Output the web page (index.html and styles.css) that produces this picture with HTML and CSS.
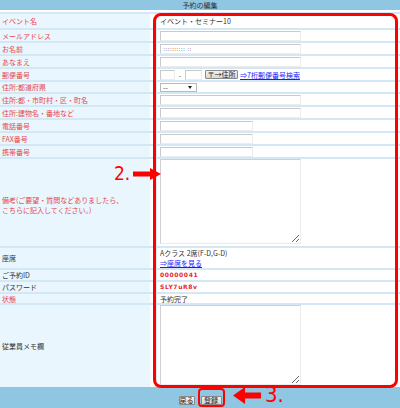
FILE: index.html
```html
<!DOCTYPE html>
<html lang="ja">
<head>
<meta charset="utf-8">
<title>予約の編集</title>
<link rel="stylesheet" href="styles.css">
</head>
<body>
<div class="page">
  <div class="header">予約の編集</div>
  <div class="form">
    <div class="row h16"><div class="label req">イベント名</div><div class="val">イベント・セミナー10</div></div>
    <div class="row h13"><div class="label req">メールアドレス</div><div class="val"><input class="txt" type="text"></div></div>
    <div class="row h13"><div class="label req">お名前</div><div class="val"><div class="txt name"><span class="dots">:::::::::: ::</span></div></div></div>
    <div class="row h13"><div class="label req">あなまえ</div><div class="val"><input class="txt" type="text"></div></div>
    <div class="row h13"><div class="label req">郵便番号</div><div class="val"><input class="txt zip1" type="text"><span class="dash">-</span><input class="txt zip2" type="text"><button class="btn zipbtn" type="button">〒→住所</button><a class="link" href="#">⇒7桁郵便番号検索</a></div></div>
    <div class="row h12"><div class="label req">住所:都道府県</div><div class="val"><div class="sel"><span>--</span><span class="tri"></span></div></div></div>
    <div class="row h13"><div class="label req">住所:都・市町村・区・町名</div><div class="val"><input class="txt" type="text"></div></div>
    <div class="row h13"><div class="label req">住所:建物名・番地など</div><div class="val"><input class="txt" type="text"></div></div>
    <div class="row h13"><div class="label req">電話番号</div><div class="val"><input class="txt short" type="text"></div></div>
    <div class="row h13"><div class="label req">FAX番号</div><div class="val"><input class="txt short" type="text"></div></div>
    <div class="row h13"><div class="label req">携帯番号</div><div class="val"><input class="txt short" type="text"></div></div>
    <div class="row h89"><div class="label req two">備考(ご要望・質問などありましたら、<br>こちらに記入してください。)</div><div class="val top"><textarea class="area a85"></textarea></div></div>
    <div class="row h22"><div class="label">座席</div><div class="val col"><span>Aクラス 2席(F-D,G-D)</span><a class="link" href="#">⇒座席を見る</a></div></div>
    <div class="row h12"><div class="label">ご予約ID</div><div class="val"><span class="redval">00000041</span></div></div>
    <div class="row h12"><div class="label">パスワード</div><div class="val"><span class="redval">SLY7uR8v</span></div></div>
    <div class="row h11"><div class="label req">状態</div><div class="val">予約完了</div></div>
    <div class="row h84"><div class="label">従業員メモ欄</div><div class="val top"><textarea class="area a80"></textarea></div></div>
  </div>
  <div class="footer">
    <button class="btn fbtn back" type="button">戻る</button>
    <button class="btn fbtn save" type="button">登録</button>
  </div>

  <div class="hl-main"></div>
  <div class="hl-btn"></div>
  <span class="step step2">2.</span>
  <svg class="arrow arrow2" width="28" height="16" viewBox="0 0 28 16"><polygon points="0,5.5 17,5.5 17,2 28,8 17,14 17,10.5 0,10.5" fill="#ff0000"/></svg>
  <svg class="arrow arrow3" width="28" height="17" viewBox="0 0 28 17"><polygon points="0,8.5 12,0 12,5.5 28,5.5 28,11.5 12,11.5 12,17" fill="#ff0000"/></svg>
  <span class="step step3">3.</span>
</div>
</body>
</html>
```
FILE: styles.css
```css
* { box-sizing: border-box; margin: 0; padding: 0; }
html, body { width: 400px; height: 408px; overflow: hidden; background: #fff; }
body {
  font-family: "Noto Sans CJK JP", "Noto Sans", sans-serif;
  font-size: 7px;
  color: #333;
}
.page { position: relative; width: 400px; height: 408px; display: flex; flex-direction: column; }

.header {
  height: 10px;
  margin-bottom: 2px;
  background: #8fc6e1;
  text-align: center;
  line-height: 10px;
  color: #333;
}

.form { display: flex; flex-direction: column; }
.row { display: flex; border-top: 2px solid #d3e7f5; background: #fff; }
.h11 { height: 11px; } .h12 { height: 12px; } .h13 { height: 13px; } .h16 { height: 16px; }
.h22 { height: 22px; } .h84 { height: 84px; } .h89 { height: 89px; }

.label {
  width: 150px;
  flex: none;
  background: #e9f6fd;
  display: flex;
  align-items: center;
  padding-left: 2px;
  color: #333;
  white-space: nowrap;
  line-height: 10px;
}
.label.req { color: #e8474b; }
.label.two { padding-top: 4px; }

.val {
  flex: 1;
  margin-left: 5px;
  border-left: 2px solid #d3e7f5;
  padding-left: 3px;
  display: flex;
  align-items: center;
  white-space: nowrap;
  line-height: 10px;
}
.val.top { align-items: flex-start; padding-top: 0; }
.val.col { flex-direction: column; align-items: flex-start; justify-content: center; line-height: 10px; }

.txt {
  width: 141px;
  height: 10px;
  border: 1px solid;
  border-color: #c9c9c9 #ececec #ececec #c9c9c9;
  background: #fff;
  font: inherit;
  outline: none;
}
.txt.short { width: 93px; }
.txt.zip1 { width: 15px; }
.txt.zip2 { width: 17px; }
.name { display: flex; align-items: center; padding-left: 2px; }
.dots { color: #666; font-family: "DejaVu Sans", sans-serif; font-size: 6px; letter-spacing: 0.2px; line-height: 8px; }
.dash { width: 10px; text-align: center; color: #444; }

.btn {
  font: inherit;
  font-size: 7px;
  line-height: 7px;
  color: #222;
  background: linear-gradient(#f2f2f2, #d6d6d6);
  border: 1px solid #8a8a8a;
  border-radius: 1px;
  padding: 0;
}
.zipbtn { width: 33px; height: 9px; margin-left: 3px; }
.link { color: #1b1bff; text-decoration: underline; margin-left: 2px; }
.val.col .link { margin-left: 0; }

.sel {
  width: 37px;
  height: 9px;
  border: 1px solid #b8b8b8;
  background: #fff;
  display: flex;
  align-items: center;
  justify-content: space-between;
  padding: 0 4px 0 2px;
  line-height: 7px;
}
.tri { width: 0; height: 0; border-left: 2.5px solid transparent; border-right: 2.5px solid transparent; border-top: 3px solid #222; }

.area {
  width: 141px;
  border: 1px solid;
  border-color: #d0d0d0 #ececec #ececec #d0d0d0;
  background: #fff;
  font: inherit;
  outline: none;
}
.a85 { height: 85px; }
.a80 { height: 80px; margin-top: 0; }

.redval { color: #e8242c; font-weight: bold; font-family: "DejaVu Sans", sans-serif; font-size: 6px; letter-spacing: 0.6px; }

.footer {
  flex: 1;
  background: #8fc6e1;
  display: flex;
  justify-content: center;
  align-items: flex-start;
  gap: 6px;
  padding-top: 9px;
}
.fbtn { height: 9px; }
.back { width: 16px; }
.save { width: 21px; }

/* annotation overlays */
.hl-main {
  position: absolute;
  left: 153px; top: 13px;
  width: 245px; height: 375px;
  border: 3px solid #ff0000;
  border-radius: 8px;
}
.hl-btn {
  position: absolute;
  left: 198px; top: 388px;
  width: 27px; height: 19px;
  border: 2px solid #ff0000;
  border-radius: 4px;
}
.step {
  position: absolute;
  color: #ff0000;
  font-family: "DejaVu Sans Condensed", "DejaVu Sans", sans-serif;
}
.step2 { left: 114px; top: 164px; font-size: 19px; line-height: 19px; }
.step3 { left: 265px; top: 384px; font-size: 22px; line-height: 22px; }
.arrow { position: absolute; }
.arrow2 { left: 133px; top: 166px; }
.arrow3 { left: 233px; top: 387px; }
```
